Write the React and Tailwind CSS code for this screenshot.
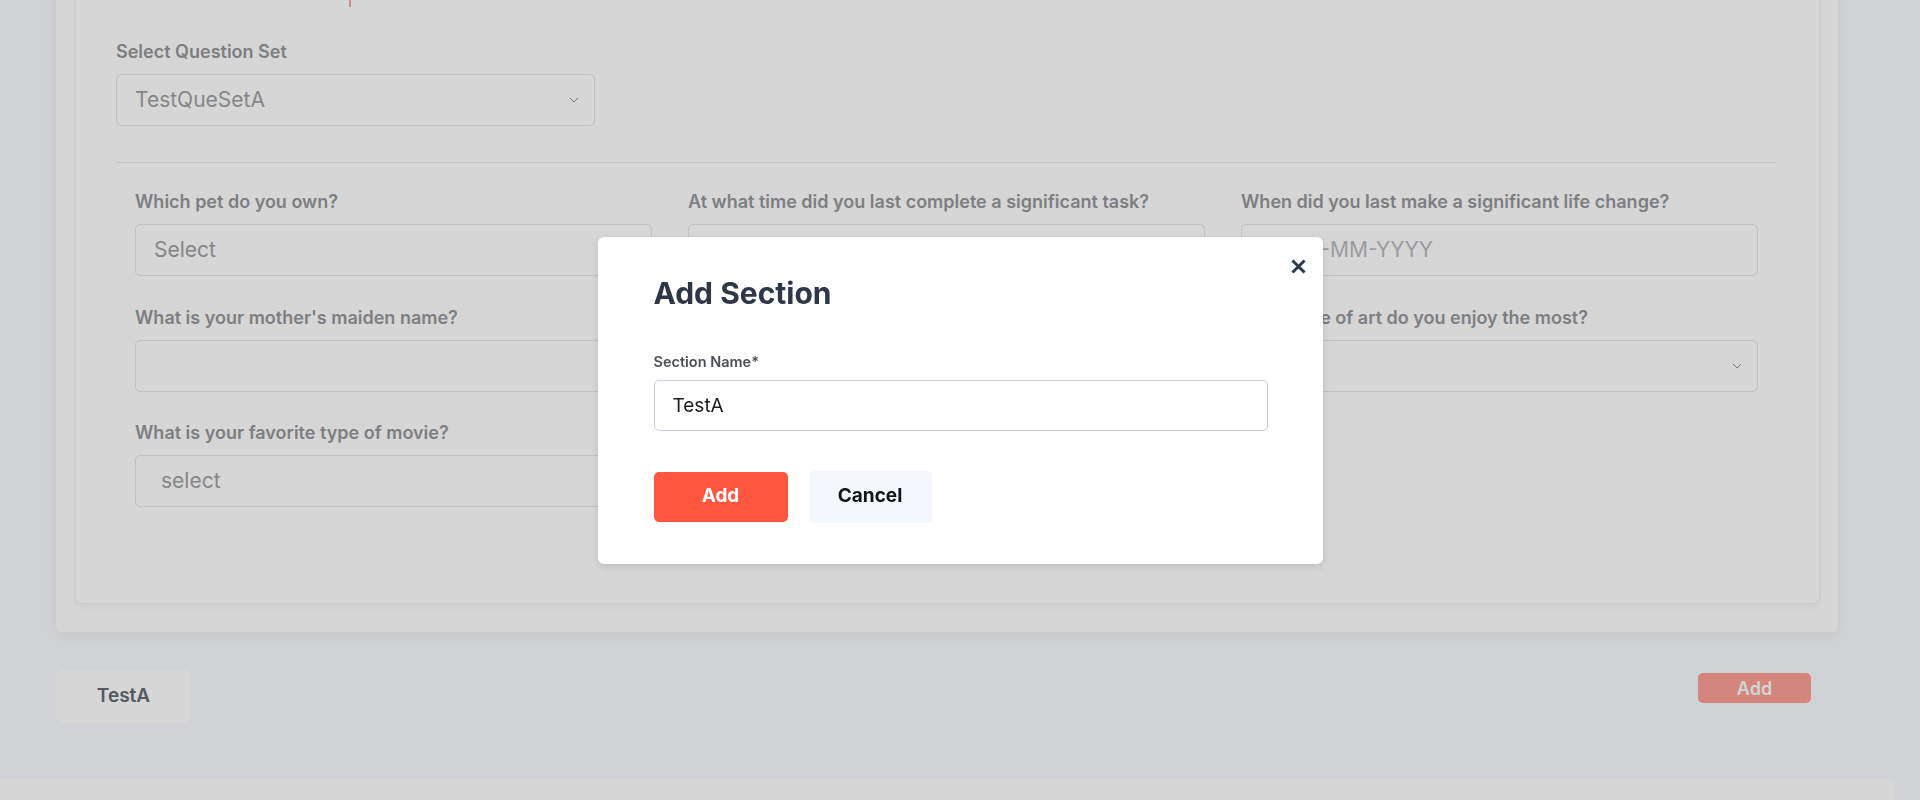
import React from 'react';

const Chevron = () => (
  <svg width="10" height="6" viewBox="0 0 10 6" fill="none" className="shrink-0">
    <path d="M1 1l4 4 4-4" stroke="#8a8c93" strokeWidth="1" />
  </svg>
);

function Field({ label, children }) {
  return (
    <div className="flex flex-col">
      <label className="text-[18px] leading-6 font-semibold text-[#96979b] whitespace-nowrap">{label}</label>
      <div className="mt-2.5">{children}</div>
    </div>
  );
}

function Box({ text, chevron, pad = 'pl-[18px]', light }) {
  return (
    <div className={`h-[52px] w-full border border-[#e4e6ee] rounded-[5px] bg-white flex items-center justify-between ${pad} pr-[15px]`}>
      <span className={`text-[21px] ${light ? 'text-[#b9bac0]' : 'text-[#9fa0a4]'}`}>{text}</span>
      {chevron && <Chevron />}
    </div>
  );
}

export default function App() {
  return (
    <div className="relative h-[800px] overflow-hidden bg-[#f9fbff] font-['Inter',sans-serif]">
      {/* page under the modal */}
      <div className="-mt-5 ml-[56px] w-[1782px] bg-white rounded-md shadow-[0_4px_14px_rgba(0,0,0,0.06)] pl-[19px] pr-[18px] pb-[28px]">
        <div className="bg-white rounded-md border border-[#f2f2f4] shadow-[0_3px_6px_rgba(0,0,0,0.04)] pl-[40px] pr-[42px] pb-[96px]">
          <div className="ml-[233px] h-[26px] w-[2px] bg-[#ffa0a4]" />

          <div className="mt-[33px] text-[18px] leading-6 font-semibold text-[#96979b]">Select Question Set</div>
          <div className="mt-2.5 w-[479px] h-[52px] border border-[#e4e6ee] rounded-[5px] flex items-center justify-between pl-[18px] pr-[15px]">
            <span className="text-[21px] text-[#9fa0a4]">TestQueSetA</span>
            <Chevron />
          </div>

          <div className="mt-[36px] h-px bg-[#e7e8f0]" />

          <div className="mt-[27px] px-[19px] grid grid-cols-3 gap-x-[36px] gap-y-[29.5px]">
            <Field label="Which pet do you own?">
              <Box text="Select" chevron />
            </Field>
            <Field label="At what time did you last complete a significant task?">
              <Box text="" />
            </Field>
            <Field label="When did you last make a significant life change?">
              <Box text="DD-MM-YYYY" pad="pl-12" light />
            </Field>

            <Field label="What is your mother's maiden name?">
              <Box text="" />
            </Field>
            <Field label="What is your favorite color?">
              <Box text="" />
            </Field>
            <Field label="What type of art do you enjoy the most?">
              <Box text="" chevron />
            </Field>

            <Field label="What is your favorite type of movie?">
              <Box text="select" pad="pl-[25px]" chevron />
            </Field>
          </div>
        </div>
      </div>

      <div className="mt-[38px] ml-[56px] w-[1755px] flex justify-between items-start">
        <div className="w-[135px] h-[53px] rounded-md bg-white flex items-center justify-center text-[19px] font-semibold text-[#666a73]">
          TestA
        </div>
        <button className="mt-[3px] w-[113px] h-[30px] rounded-[5px] bg-[#ff5640] opacity-55 text-white text-[18px] font-semibold">
          Add
        </button>
      </div>

      <div className="mt-[56px] w-[1895px] h-[200px] bg-white rounded-tr-md" />

      {/* modal */}
      <div className="fixed inset-0 bg-black/[0.16] flex items-center justify-center">
        <div className="relative w-[725px] bg-white rounded-md shadow-[0_3px_8px_rgba(0,0,0,0.12)] pt-[38px] pb-[41px] pl-14 pr-[55px]">
          <button className="absolute top-[22px] right-[17px] w-[15px] h-[15px]">
            <svg width="15" height="15" viewBox="0 0 15 15" fill="none">
              <path d="M2.5 2.5l10 10M12.5 2.5l-10 10" stroke="#2d3a4b" strokeWidth="3" strokeLinecap="square" />
            </svg>
          </button>
          <h2 className="text-[30px] leading-9 font-bold text-[#2d3748]">Add Section</h2>
          <label className="block mt-[41px] text-[14.5px] leading-5 font-semibold text-[#4b4f57]">Section Name*</label>
          <input
            readOnly
            value="TestA"
            className="mt-2 w-full h-[51px] border border-[#c8cfd9] rounded-[5px] px-[18px] text-[19px] text-[#1b1b1f] outline-none"
          />
          <div className="mt-10 flex items-center gap-[21px]">
            <button className="w-[134px] h-[50px] rounded-[5px] bg-[#ff5640] text-white text-[19px] font-bold">Add</button>
            <button className="w-[123px] h-[52px] rounded-[5px] bg-[#f4f7fc] text-[#121317] text-[19px] font-bold">Cancel</button>
          </div>
        </div>
      </div>
    </div>
  );
}
